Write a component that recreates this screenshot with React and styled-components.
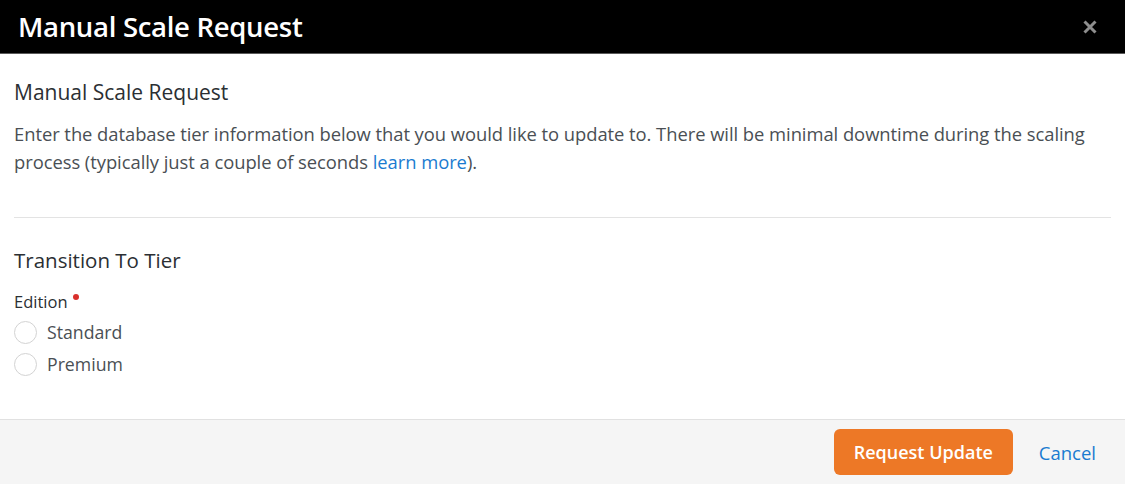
import React, { useState } from 'react';
import styled, { createGlobalStyle } from 'styled-components';

const GlobalStyle = createGlobalStyle`
  html, body {
    margin: 0;
    padding: 0;
    background: #ffffff;
  }
  body {
    font-family: "Open Sans", "Noto Sans", sans-serif;
  }
  * {
    box-sizing: border-box;
  }
`;

const Modal = styled.div`
  width: 1125px;
  height: 484px;
  display: flex;
  flex-direction: column;
  background: #ffffff;
  overflow: hidden;
`;

const TitleBar = styled.div`
  height: 54px;
  flex-shrink: 0;
  display: flex;
  align-items: center;
  justify-content: space-between;
  padding: 0 28px 0 18px;
  background: #000000;
  border-bottom: 1px solid #5a5a5a;
`;

const Title = styled.h1`
  margin: 0;
  color: #ffffff;
  font-size: 27.5px;
  font-weight: 600;
  letter-spacing: -0.3px;
`;

const CloseButton = styled.button`
  border: none;
  background: transparent;
  padding: 0;
  width: 14px;
  height: 14px;
  display: flex;
  cursor: pointer;
`;

const Body = styled.div`
  flex: 1;
  padding: 24px 14px 0 14px;
`;

const SectionTitle = styled.h2`
  margin: 0 0 ${(p) => p.$gap || 8}px 0;
  font-size: ${(p) => p.$size || 20}px;
  font-weight: 400;
  color: #2b2f33;
  line-height: 28px;
`;

const Text = styled.p`
  margin: 0;
  font-size: 18.4px;
  line-height: 28px;
  color: #4a4f54;
  letter-spacing: -0.05px;
`;

const Link = styled.a`
  color: #1a7bd0;
  text-decoration: none;
`;

const Divider = styled.hr`
  margin: 41px 0 28px 0;
  border: none;
  border-top: 1px solid #e3e3e3;
  width: 1097px;
`;

const FieldLabel = styled.div`
  display: flex;
  align-items: flex-start;
  gap: 5px;
  font-size: 16.5px;
  font-weight: 500;
  color: #2b2f33;
  line-height: 20px;
`;

const RequiredDot = styled.span`
  width: 6px;
  height: 6px;
  border-radius: 50%;
  background: #d9302c;
  margin-top: 2px;
`;

const RadioGroup = styled.div`
  display: flex;
  flex-direction: column;
  margin-top: 4px;
`;

const RadioRow = styled.label`
  display: flex;
  align-items: center;
  gap: 10px;
  height: 32px;
  cursor: pointer;
  font-size: 17.7px;
  color: #4a4f54;
`;

const RadioCircle = styled.span`
  width: 23px;
  height: 23px;
  border-radius: 50%;
  border: 1.5px solid #d3d3d3;
  background: #ffffff;
  display: flex;
  align-items: center;
  justify-content: center;

  &::after {
    content: '';
    width: 11px;
    height: 11px;
    border-radius: 50%;
    background: ${(p) => (p.$checked ? '#ed7826' : 'transparent')};
  }
`;

const Footer = styled.div`
  height: 65px;
  flex-shrink: 0;
  display: flex;
  align-items: center;
  justify-content: flex-end;
  gap: 26px;
  padding: 0 29px 0 0;
  background: #f5f5f5;
  border-top: 1px solid #e1e1e1;
`;

const PrimaryButton = styled.button`
  height: 46px;
  width: 179px;
  padding: 0;
  border: none;
  border-radius: 6px;
  background: #ed7826;
  color: #ffffff;
  font-family: inherit;
  font-size: 18px;
  font-weight: 600;
  cursor: pointer;
`;

const LinkButton = styled.button`
  border: none;
  background: transparent;
  padding: 0;
  color: #1a7bd0;
  font-family: inherit;
  font-size: 18.5px;
  cursor: pointer;
`;

const editions = ['Standard', 'Premium'];

export default function App() {
  const [edition, setEdition] = useState(null);

  return (
    <>
      <GlobalStyle />
      <Modal>
        <TitleBar>
          <Title>Manual Scale Request</Title>
          <CloseButton aria-label="Close">
            <svg width="14" height="14" viewBox="0 0 14 14">
              <path d="M1.5 1.5 L12.5 12.5 M12.5 1.5 L1.5 12.5" stroke="#8e8e8e" strokeWidth="3" />
            </svg>
          </CloseButton>
        </TitleBar>
        <Body>
          <SectionTitle $gap={14} $size={21}>Manual Scale Request</SectionTitle>
          <Text>
            Enter the database tier information below that you would like to update to. There will be minimal downtime during the scaling
            process (typically just a couple of seconds <Link href="#">learn more</Link>).
          </Text>
          <Divider />
          <SectionTitle $gap={18} $size={20.5}>Transition To Tier</SectionTitle>
          <FieldLabel>
            Edition <RequiredDot />
          </FieldLabel>
          <RadioGroup>
            {editions.map((name) => (
              <RadioRow key={name} onClick={() => setEdition(name)}>
                <RadioCircle $checked={edition === name} />
                {name}
              </RadioRow>
            ))}
          </RadioGroup>
        </Body>
        <Footer>
          <PrimaryButton>Request Update</PrimaryButton>
          <LinkButton>Cancel</LinkButton>
        </Footer>
      </Modal>
    </>
  );
}
